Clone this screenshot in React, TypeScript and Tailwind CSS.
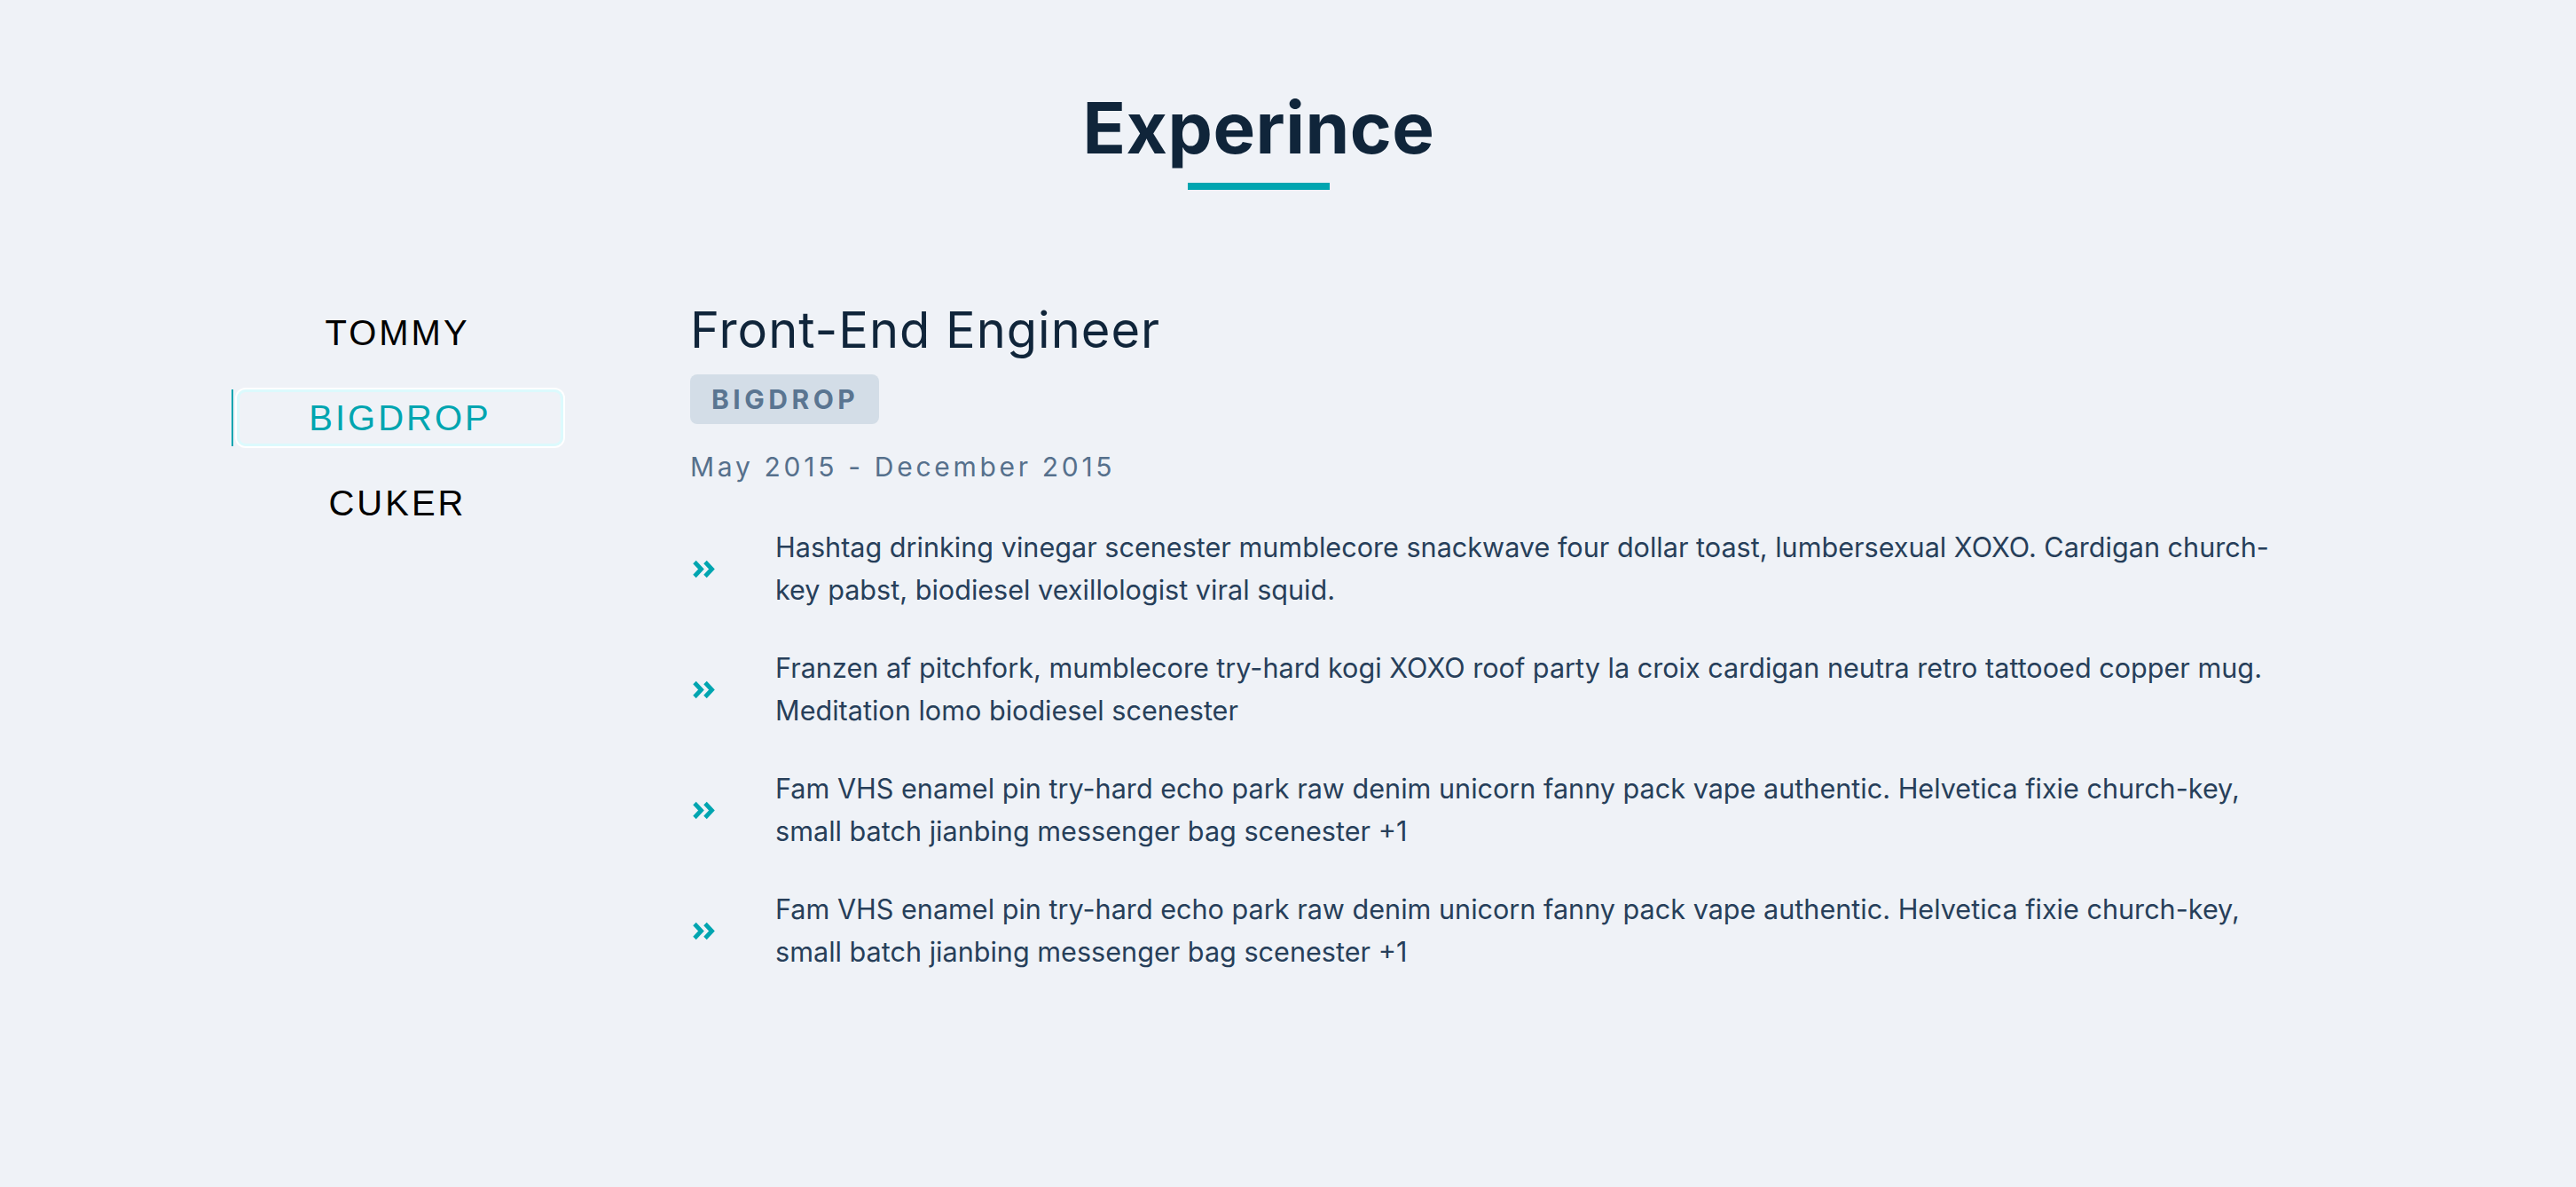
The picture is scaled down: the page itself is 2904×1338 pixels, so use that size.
import React from "react";

const bullets = [
  "Hashtag drinking vinegar scenester mumblecore snackwave four dollar toast, lumbersexual XOXO. Cardigan church-key pabst, biodiesel vexillologist viral squid.",
  "Franzen af pitchfork, mumblecore try-hard kogi XOXO roof party la croix cardigan neutra retro tattooed copper mug. Meditation lomo biodiesel scenester",
  "Fam VHS enamel pin try-hard echo park raw denim unicorn fanny pack vape authentic. Helvetica fixie church-key, small batch jianbing messenger bag scenester +1",
  "Fam VHS enamel pin try-hard echo park raw denim unicorn fanny pack vape authentic. Helvetica fixie church-key, small batch jianbing messenger bag scenester +1",
];

function Chevrons() {
  return (
    <svg width="28" height="21" viewBox="0 0 28 21" fill="none">
      <polyline points="3,2.5 10.5,10.5 3,18.5" stroke="#00a5b0" strokeWidth="4.8" strokeLinejoin="miter" strokeLinecap="butt" />
      <polyline points="15,2.5 22.5,10.5 15,18.5" stroke="#00a5b0" strokeWidth="4.8" strokeLinejoin="miter" strokeLinecap="butt" />
    </svg>
  );
}

export default function App() {
  return (
    <div className="min-h-screen w-full bg-[#eff2f7] pt-[104px] font-['Inter',sans-serif]">
      <div className="flex flex-col items-center pr-[66px]">
        <h2 className="text-center text-[80px] leading-none font-bold text-[#10253a] tracking-[0.5px]">
          Experince
        </h2>
        <div className="mt-[22px] h-[8px] w-[160px] bg-[#00a5b0]" />
      </div>

      <div className="mt-[127px] flex pl-[261px]">
        <nav className="flex w-[374px] flex-col gap-[28px] font-['Liberation_Sans',Arial,sans-serif] text-[40px] tracking-[3px]">
          <button className="flex h-[68px] items-center justify-center text-black">TOMMY</button>
          <div className="flex h-[68px] items-stretch">
            <div className="my-[2px] w-[2px] bg-[#00a5b0]" />
            <button className="my-[2px] ml-[4px] flex flex-1 items-center justify-center rounded-[10px] border-[3px] border-[#dcfafd] text-[#00a5b0] ring-2 ring-white">
              BIGDROP
            </button>
          </div>
          <button className="flex h-[68px] items-center justify-center text-black">CUKER</button>
        </nav>

        <div className="ml-[143px] flex flex-col -mt-[3px]">
          <h3 className="text-[56px] leading-[68px] font-normal text-[#10253a] tracking-[1px]">
            Front-End Engineer
          </h3>
          <div className="mt-[16px] flex">
            <span className="flex h-[56px] items-center rounded-[8px] bg-[#d3dde7] pl-[24px] pr-[23px] text-[30px] font-bold tracking-[4.5px] text-[#5a7591]">
              BIGDROP
            </span>
          </div>
          <p className="mt-[28px] text-[30px] leading-[40px] tracking-[3.7px] text-[#56708c]">
            May 2015 - December 2015
          </p>
          <ul className="mt-[47px] flex flex-col gap-[40px]">
            {bullets.map((b, i) => (
              <li key={i} className="flex items-center">
                <div className="flex w-[96px] shrink-0 items-center pl-[2px]">
                  <Chevrons />
                </div>
                <p className="w-[1716px] text-[30.6px] leading-[48px] text-[#273f5a]">{b}</p>
              </li>
            ))}
          </ul>
        </div>
      </div>
    </div>
  );
}
